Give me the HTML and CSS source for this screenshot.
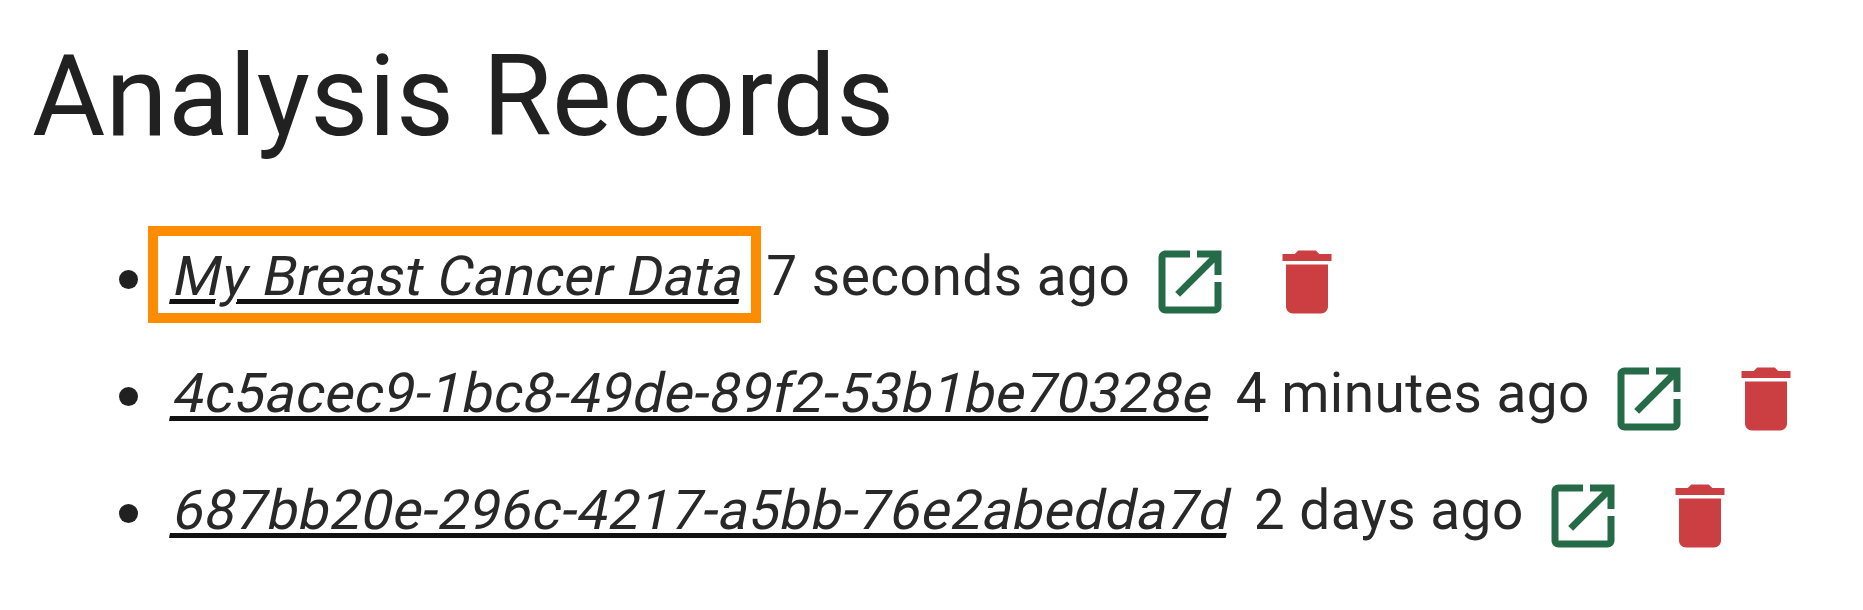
FILE: index.html
```html
<!DOCTYPE html>
<html lang="en">
<head>
<meta charset="utf-8">
<title>Analysis Records</title>
<link rel="stylesheet" href="styles.css">
</head>
<body>
<svg class="defs" width="0" height="0">
  <symbol id="open" viewBox="0 0 24 24"><path d="M19 19H5V5h7V3H5c-1.11 0-2 .9-2 2v14c0 1.1.89 2 2 2h14c1.1 0 2-.9 2-2v-7h-2v7zM14 3v2h3.59l-9.83 9.83 1.41 1.41L19 6.41V10h2V3h-7z"/></symbol>
  <symbol id="trash" viewBox="0 0 24 24"><path d="M6 19c0 1.1.9 2 2 2h8c1.1 0 2-.9 2-2V7H6v12zM19 4h-3.5l-1-1h-5l-1 1H5v2h14V4z"/></symbol>
</svg>
<main class="page">
  <h1 class="title">Analysis Records</h1>
  <ul class="records">
    <li class="record record-highlighted"><a class="name"><span class="slant">My Breast Cancer Data</span></a><span class="age">7 seconds ago</span><svg class="icon icon-open"><use href="#open"/></svg><svg class="icon icon-trash"><use href="#trash"/></svg></li>
    <li class="record"><a class="name"><span class="slant">4c5acec9-1bc8-49de-89f2-53b1be70328e</span></a><span class="age">4 minutes ago</span><svg class="icon icon-open"><use href="#open"/></svg><svg class="icon icon-trash"><use href="#trash"/></svg></li>
    <li class="record"><a class="name"><span class="slant">687bb20e-296c-4217-a5bb-76e2abedda7d</span></a><span class="age">2 days ago</span><svg class="icon icon-open"><use href="#open"/></svg><svg class="icon icon-trash"><use href="#trash"/></svg></li>
  </ul>
</main>
</body>
</html>
```
FILE: styles.css
```css
body { margin: 0; background: #fff; color: #212121; font-family: Roboto, "Liberation Sans", sans-serif; }
.defs { position: absolute; }
.page { padding: 33px 0 0 32px; }
.title { margin: 0; font-size: 112.5px; font-weight: 400; line-height: 128px; letter-spacing: 0.2px; }
.records { margin: 60px 0 0; padding: 0; list-style: none; }
.record { display: flex; align-items: center; height: 117px; padding-left: 87px; font-size: 55px; font-weight: 400; letter-spacing: 0.47px; white-space: pre; color: #282828; }
.record::before { content: ""; width: 19px; height: 19px; border-radius: 50%; background: #212121; margin-right: 32px; }
.name { position: relative; margin-top: -6.5px; line-height: 64px; }
.slant { display: block; transform: skewX(-11.5deg); transform-origin: 0 55px; text-decoration: underline #111; text-decoration-thickness: 4.5px; text-underline-offset: 3.5px; }
.record-highlighted .name::after { content: ""; position: absolute; box-sizing: border-box; left: -22px; right: -21.5px; top: -18.5px; height: 97px; border: 10px solid #fe8c00; }
.age { margin: -6.5px 0 0 27px; }
.icon { width: 84px; height: 84px; margin-top: 5px; }
.icon-open { margin-left: 17.5px; fill: #266b47; }
.icon-trash { margin-left: 33px; fill: #cb3e42; }
```
